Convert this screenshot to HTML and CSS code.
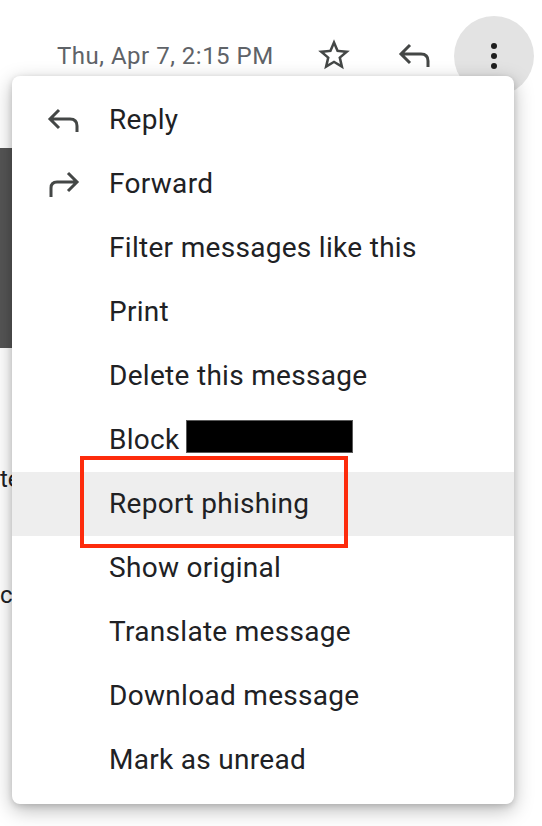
FILE: index.html
```html
<!DOCTYPE html>
<html>
<head>
<meta charset="utf-8">
<link rel="stylesheet" href="styles.css">
</head>
<body>
<div class="page">
  <div class="header">
    <span class="date">Thu, Apr 7, 2:15 PM</span>
    <svg class="star" viewBox="0 0 24 24" width="38" height="38"><path fill="#444746" d="M22 9.24l-7.19-.62L12 2 9.19 8.63 2 9.24l5.46 4.73L5.82 21 12 17.270 18.18 21l-1.63-7.03L22 9.24zM12 15.4l-3.76 2.27 1-4.28-3.32-2.88 4.38-.38L12 6.1l1.71 4.04 4.38.38-3.32 2.88 1 4.28L12 15.4z"/></svg>
    <svg class="hreply" viewBox="0 0 36 36" width="36" height="36"><path d="M14 8 L5 17 L14 26 M5 17 H25 Q32 17 32 24 V30" fill="none" stroke="#444746" stroke-width="3"/></svg>
    <div class="more"><span class="dot"></span><span class="dot"></span><span class="dot"></span></div>
  </div>
  <div class="behind">
    <div class="bar"></div>
    <div class="frag frag1">text</div>
    <div class="frag frag2">contact</div>
  </div>

  <div class="menu">
    <div class="item">
      <svg class="icon" viewBox="0 0 36 36" width="36" height="36"><path d="M14 8 L5 17 L14 26 M5 17 H25 Q32 17 32 24 V30" fill="none" stroke="#444746" stroke-width="3"/></svg>
      <span class="label">Reply</span>
    </div>
    <div class="item">
      <svg class="icon" viewBox="0 0 36 36" width="36" height="36"><path d="M23 7 L32 16 L23 25 M32 16 H12 Q6 16 6 22 V31" fill="none" stroke="#444746" stroke-width="3"/></svg>
      <span class="label">Forward</span>
    </div>
    <div class="item"><span class="icon"></span><span class="label">Filter messages like this</span></div>
    <div class="item"><span class="icon"></span><span class="label">Print</span></div>
    <div class="item"><span class="icon"></span><span class="label">Delete this message</span></div>
    <div class="item"><span class="icon"></span><span class="label">Block</span><span class="redact"></span></div>
    <div class="item active"><span class="icon"></span><span class="label">Report phishing</span></div>
    <div class="item"><span class="icon"></span><span class="label">Show original</span></div>
    <div class="item"><span class="icon"></span><span class="label">Translate message</span></div>
    <div class="item"><span class="icon"></span><span class="label">Download message</span></div>
    <div class="item"><span class="icon"></span><span class="label">Mark as unread</span></div>
  </div>
  <div class="redbox"></div>
</div>
</body>
</html>
```

FILE: styles.css
```css
html, body {
  margin: 0;
  padding: 0;
  background: #ffffff;
}
body {
  font-family: Roboto, "Liberation Sans", Arial, sans-serif;
  width: 542px;
  height: 826px;
  overflow: hidden;
}
.page {
  position: relative;
  width: 542px;
  height: 826px;
  overflow: hidden;
}
.header {
  display: flex;
  align-items: center;
  height: 80px;
  padding-top: 16px;
  padding-left: 57px;
}
.date {
  width: 258px;
  font-size: 24px;
  color: #5f6368;
  line-height: 28px;
  letter-spacing: 0.5px;
  white-space: nowrap;
}
.star {
  display: block;
  margin-top: -2px;
}
.hreply {
  display: block;
  margin-left: 43px;
  margin-top: -2px;
}
.more {
  margin-left: 22px;
  width: 80px;
  height: 80px;
  border-radius: 50%;
  background: #e3e3e3;
  display: flex;
  flex-direction: column;
  align-items: center;
  justify-content: center;
  gap: 4px;
}
.dot {
  width: 6px;
  height: 6px;
  border-radius: 50%;
  background: #1f1f1f;
}
.behind {
  display: flex;
  flex-direction: column;
}
.bar {
  margin-top: 52px;
  width: 120px;
  height: 200px;
  background: #555555;
}
.frag {
  font-size: 24px;
  line-height: 28px;
  color: #202124;
}
.frag1 {
  margin-top: 117px;
}
.frag2 {
  margin-top: 88px;
}
.menu {
  position: absolute;
  left: 12px;
  top: 76px;
  width: 502px;
  padding: 12px 0;
  background: #ffffff;
  border-radius: 8px;
  box-shadow: 0 6px 20px rgba(0, 0, 0, 0.28), 0 2px 6px rgba(0, 0, 0, 0.14);
}
.item {
  position: relative;
  display: flex;
  align-items: center;
  height: 64px;
}
.item.active {
  background: #eeeeee;
}
.icon {
  display: block;
  width: 36px;
  height: 36px;
  margin-left: 33px;
  margin-right: 28px;
  flex: none;
}
.label {
  font-size: 28px;
  color: #202124;
  line-height: 32px;
  letter-spacing: 0.3px;
  white-space: nowrap;
}
.redact {
  position: absolute;
  left: 174px;
  top: 12px;
  width: 167px;
  height: 33px;
  background: #000000;
  box-sizing: border-box;
  border: 1px solid #5a5a5a;
}
.redbox {
  position: absolute;
  left: 80px;
  top: 456px;
  width: 268px;
  height: 92px;
  box-sizing: border-box;
  border: 4px solid #fd2b0c;
}
```
